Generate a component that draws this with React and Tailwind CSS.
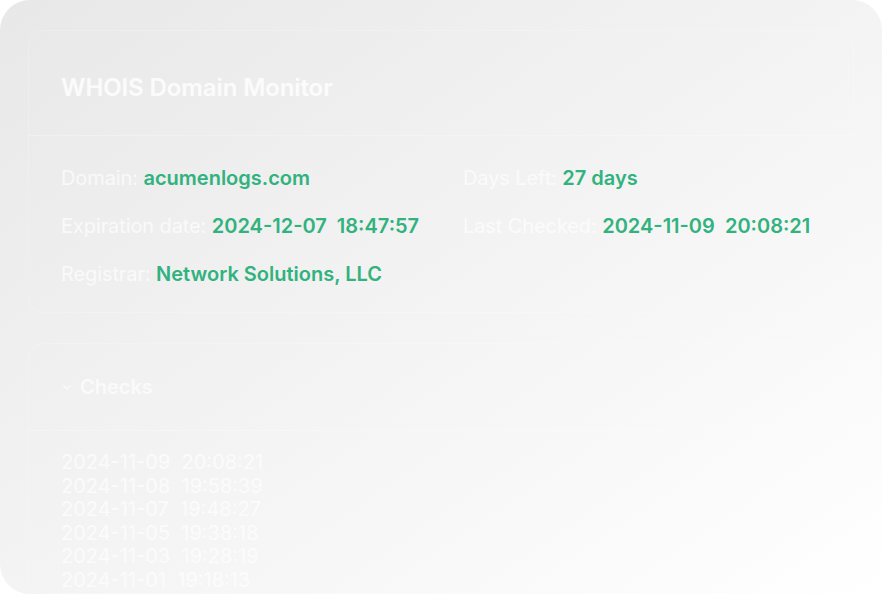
import React from "react";

const checks = [
  "2024-11-09  20:08:21",
  "2024-11-08  19:58:39",
  "2024-11-07  19:48:27",
  "2024-11-05  19:38:18",
  "2024-11-03  19:28:19",
  "2024-11-01  19:18:13",
];

function Row({ label, value }) {
  return (
    <div className="whitespace-pre text-[20px] leading-[24px]">
      <span className="text-white/70 tracking-[-0.1px]">{label} </span>
      <span className="font-semibold text-[#31b27e]">{value}</span>
    </div>
  );
}

export default function App() {
  return (
    <div className="w-[882px] h-[596px] bg-white" style={{ fontFamily: "Inter, 'Noto Sans', sans-serif" }}>
      <div className="h-[594px] w-[882px] overflow-hidden rounded-[30px] bg-gradient-to-br from-[#e8e8e8] to-[#ffffff] px-7 pt-[30px]">
        <div className="rounded-2xl border border-white/20">
          <div className="flex h-[105px] items-center border-b border-white/25 px-[32px] pt-[10px]">
            <h1 className="text-[24px] font-semibold text-white/80 tracking-[-0.1px]">WHOIS Domain Monitor</h1>
          </div>
          <div className="grid grid-cols-[402px_1fr] gap-y-[24px] px-[32px] pt-[30px] pb-[26px]">
            <Row label="Domain:" value="acumenlogs.com" />
            <Row label="Days Left:" value="27 days" />
            <Row label="Expiration date:" value="2024-12-07  18:47:57" />
            <Row label="Last Checked:" value="2024-11-09  20:08:21" />
            <Row label="Registrar:" value="Network Solutions, LLC" />
          </div>
        </div>
        <div className="mt-[30px] rounded-2xl border border-white/20">
          <div className="flex h-[87px] items-center gap-[7px] border-b border-white/25 px-[32px]">
            <svg width="12" height="12" viewBox="0 0 24 24" fill="none" stroke="white" strokeOpacity="0.75" strokeWidth="2.2" strokeLinecap="round" strokeLinejoin="round">
              <path d="M5 9l7 7 7-7" />
            </svg>
            <span className="text-[20px] font-semibold text-white/70">Checks</span>
          </div>
          <div className="px-[32px] pt-[20px]">
            {checks.map((c) => (
              <div key={c} className="whitespace-pre text-[20px] leading-[23.6px] text-white/70">{c}</div>
            ))}
          </div>
        </div>
      </div>
    </div>
  );
}
